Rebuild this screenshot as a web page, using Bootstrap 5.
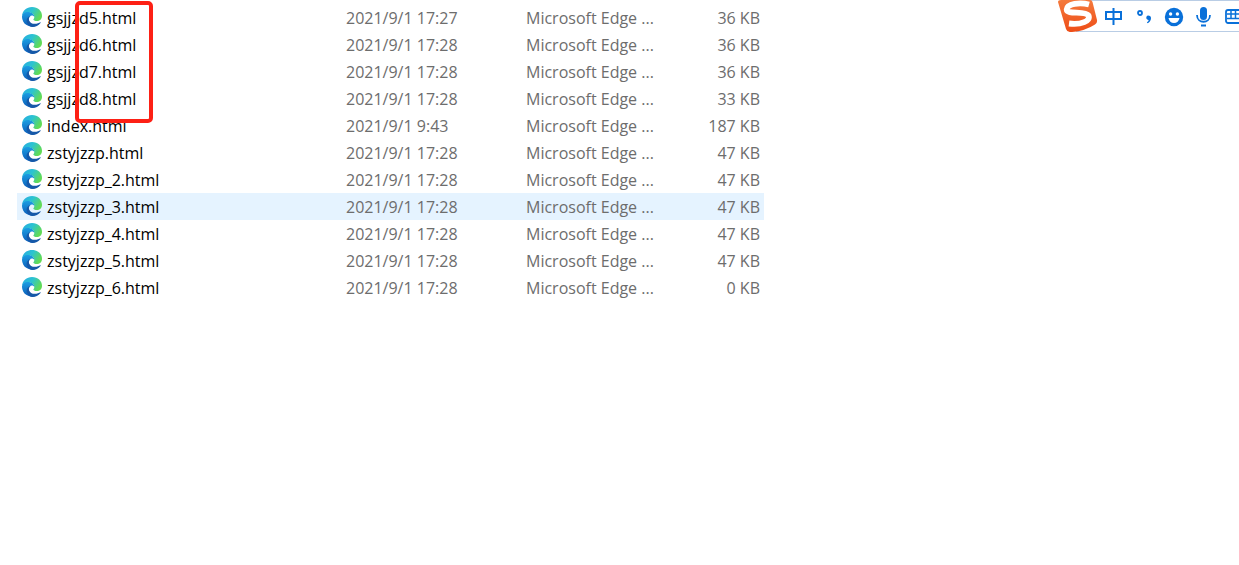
<!DOCTYPE html>
<html lang="zh-CN">
<head>
<meta charset="utf-8">
<meta name="viewport" content="width=device-width, initial-scale=1">
<title>Files</title>
<link href="https://cdn.jsdelivr.net/npm/bootstrap@5.3.0/dist/css/bootstrap.min.css" rel="stylesheet">
<style>
  body { font-family: "Open Sans", "Noto Sans CJK SC", sans-serif; font-size: 16px; background: #fff; color: #000; }
  main { margin-left: 17px; }
  .files { table-layout: fixed; width: 747px; line-height: 25px; }
  .files td { padding: 2px 0 0; height: 27px; white-space: nowrap; color: #6d6d6d; }
  .files a { color: #000; }
  .files svg { width: 22px; height: 22px; }
  .files .active-row { background: #e5f3ff; }
  .col-name { width: 329px; }
  .col-date { width: 180px; }
  .col-type { width: 150px; }
  .marker { left: 75px; top: 1px; width: 78px; height: 122px; border: 4px solid #fd2015; border-radius: 5px; pointer-events: none; }
  .ime { width: 181px; height: 32px; }
  .ime-bar { margin-left: 18px; padding-left: 27px; gap: 8px; border: solid #b9cde5; border-width: 1px 0; color: #0970d9; }
  .ime-bar button { width: 22px; height: 30px; color: inherit; }
  .ime-logo { left: 0; top: 0; width: 40px; height: 32px; }
</style>
</head>
<body>
<svg width="0" height="0" class="position-absolute" aria-hidden="true">
  <defs>
    <linearGradient id="edgeTop" x1="0" y1="0" x2="1" y2="0.5">
      <stop offset="0" stop-color="#28a9e4"/><stop offset=".5" stop-color="#2bc3d2"/><stop offset="1" stop-color="#62db55"/>
    </linearGradient>
    <linearGradient id="edgeLeft" x1="0" y1="0" x2="0" y2="1">
      <stop offset="0" stop-color="#1b9de2"/><stop offset="1" stop-color="#0c5cb8"/>
    </linearGradient>
    <symbol id="edge" viewBox="0 0 22 22">
      <path fill="url(#edgeTop)" d="M1 10C1.500 4.500 5.500 1 11 1c6 0 10 4 10 8.700 0 3.300-2.300 5.400-5.300 5.400-1.800 0-3.400-.7-3.400-1.500 0-.5 1-1 1-2.600C13.300 8.200 10.500 6.600 7.500 6.600 4.500 6.600 2 8 1 10z"/>
      <path fill="url(#edgeLeft)" d="M1 11c0-3 2.500-5 6-5 3.600 0 6.300 2.200 6.300 5.100-.5-1-1.400-1.500-2.300-1.500-1.800 0-3.200 1.400-3.200 3.400 0 4 3.500 6.500 6.200 7.200A10 10 0 0 1 1 11z"/>
      <path fill="#1558a8" d="M9.500 9.900C8 11 7.500 12.500 8 14.200c1 3.200 5.200 4.600 9 3 .9-.3 1.600-.8 2.300-.9.5 0 .5.400.2.800C17.500 19.600 14.600 21 11.600 21 7.800 20.600 5.500 17.500 5.600 14.500 5.700 12.200 7.200 10.400 9.500 9.900z"/>
    </symbol>
  </defs>
</svg>
<div class="d-flex align-items-start justify-content-between position-relative overflow-hidden">
  <main class="pt-1">
    <table class="files mb-0" aria-label="Files">
      <colgroup><col class="col-name"><col class="col-date"><col class="col-type"><col></colgroup>
      <tbody id="rows"></tbody>
    </table>
  </main>
  <div class="marker position-absolute"></div>
  <aside class="ime position-relative flex-shrink-0 overflow-hidden" aria-label="输入法">
    <div class="ime-bar d-flex h-100 overflow-hidden">
      <button class="btn p-0 border-0 flex-shrink-0" aria-label="中文"><svg class="d-block" width="22" height="30" fill="none" stroke="currentColor" stroke-width="2"><path d="M3 11h15v7H3zM10.500 7v17"/></svg></button>
      <button class="btn p-0 border-0 flex-shrink-0" aria-label="标点"><svg class="d-block" width="22" height="30"><circle cx="7" cy="12" r="2" fill="none" stroke="currentColor" stroke-width="1.800"/><path fill="currentColor" d="M15 14.500c2 0 3 1 3 2.700 0 2.200-1.500 4.200-3.500 5l-.6-1c1-.5 1.700-1.300 1.700-2.200-1.200 0-2.300-.9-2.300-2.200 0-1.300.7-2.300 1.700-2.300z"/></svg></button>
      <button class="btn p-0 border-0 flex-shrink-0" aria-label="表情"><svg class="d-block" width="22" height="30"><circle cx="11" cy="16" r="9.200" fill="currentColor"/><circle cx="7.600" cy="13" r="1.700" fill="#fff"/><circle cx="14.400" cy="13" r="1.700" fill="#fff"/><path fill="#fff" d="M5.500 17h11c-.5 3-2.700 5-5.500 5s-5-2-5.500-5z"/></svg></button>
      <button class="btn p-0 border-0 flex-shrink-0" aria-label="语音"><svg class="d-block" width="22" height="30"><rect x="7" y="6" width="7" height="13" rx="3.500" fill="currentColor"/><path d="M4 14c0 9 13 9 13 0M8 24.500h5" fill="none" stroke="currentColor" stroke-width="1.800"/></svg></button>
      <button class="btn p-0 border-0 flex-shrink-0" aria-label="键盘"><svg class="d-block" width="22" height="30" fill="none" stroke="currentColor" stroke-width="1.800"><rect x="3" y="9" width="20" height="13" rx="2"/><path stroke-width="1.500" d="M4 13h18M4 17.500h18M8 9v9M12.500 9v9M17 9v9"/></svg></button>
    </div>
    <svg class="ime-logo position-absolute" viewBox="0 0 40 32" role="img" aria-label="S">
      <defs><linearGradient id="ember" x1="0" y1="0" x2="0" y2="1"><stop offset="0" stop-color="#f47a3d"/><stop offset="1" stop-color="#ee4d17"/></linearGradient></defs>
      <path fill="url(#ember)" d="M0 2Q0 0 3 0H32Q34 0 34.500 2L39 20Q39.500 23 37 24.500Q27 31 14 32Q9 32.500 8 29Z"/>
      <path fill="none" stroke="#fff" stroke-width="5.800" stroke-linejoin="round" d="M31 4.500C22 2 9 3.500 8.700 9.500 8.500 15 27 10.500 30.500 15.500 33 21 23 25 11 23.500"/>
    </svg>
  </aside>
</div>
<script src="https://cdn.jsdelivr.net/npm/bootstrap@5.3.0/dist/js/bootstrap.bundle.min.js"></script>
<script>
  const files = [
    ["gsjjzd5.html", "17:27", "36"], ["gsjjzd6.html", "17:28", "36"], ["gsjjzd7.html", "17:28", "36"],
    ["gsjjzd8.html", "17:28", "33"], ["index.html", "9:43", "187"], ["zstyjzzp.html", "17:28", "47"],
    ["zstyjzzp_2.html", "17:28", "47"], ["zstyjzzp_3.html", "17:28", "47"], ["zstyjzzp_4.html", "17:28", "47"],
    ["zstyjzzp_5.html", "17:28", "47"], ["zstyjzzp_6.html", "17:28", "0"]
  ];
  document.getElementById("rows").innerHTML = files.map(([name, time, size]) => `
    <tr class="${name === "zstyjzzp_3.html" ? "active-row" : ""}">
      <td><a href="#" class="d-flex text-decoration-none ps-1 gap-1"><svg aria-hidden="true"><use href="#edge"/></svg><span>${name}</span></a></td>
      <td>2021/9/1 ${time}</td><td>Microsoft Edge ...</td><td class="text-end pe-1">${size} KB</td>
    </tr>`).join("");
</script>
</body>
</html>
